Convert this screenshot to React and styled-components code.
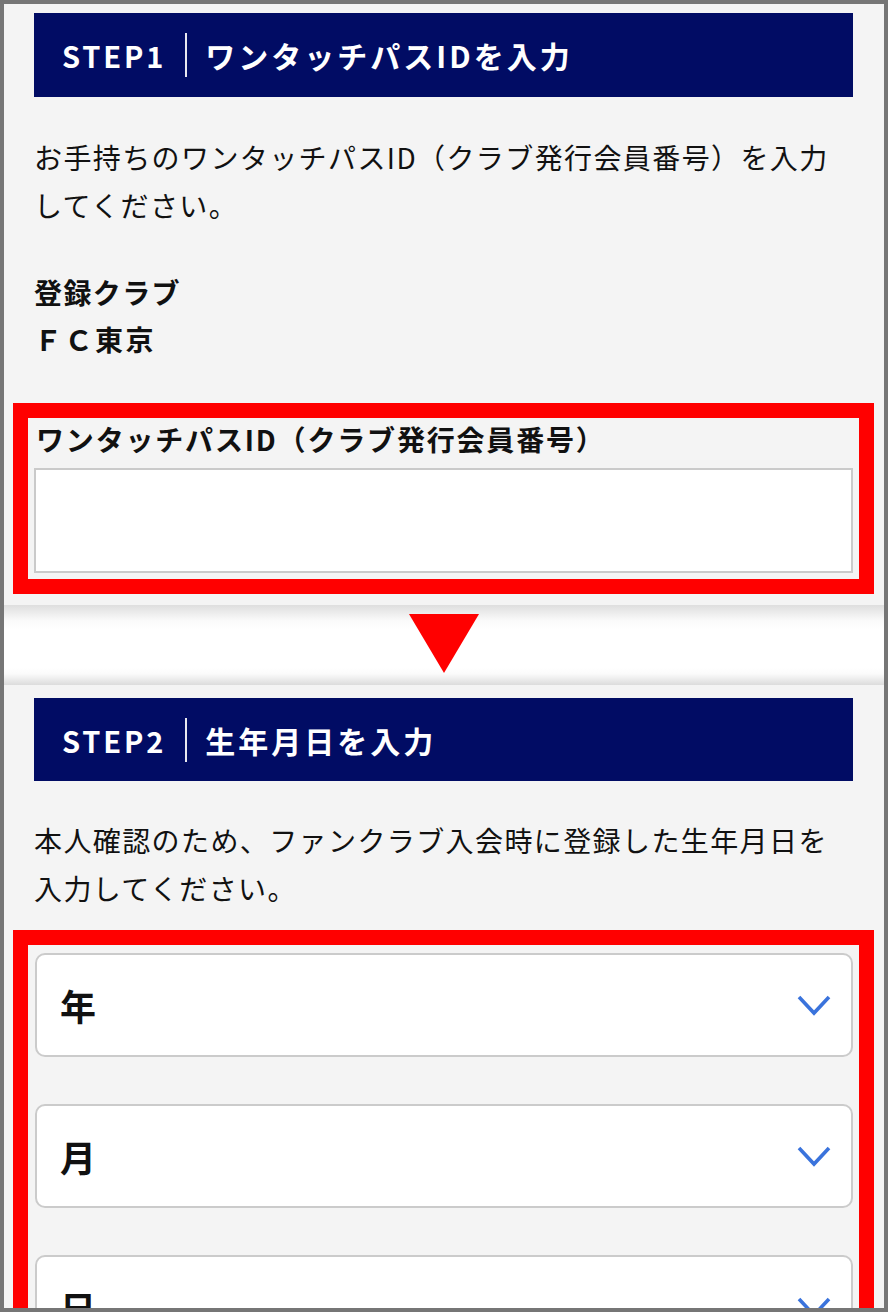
import React from 'react'
import styled, { createGlobalStyle } from 'styled-components'

const GlobalStyle = createGlobalStyle`
  body {
    margin: 0;
    font-family: "Noto Sans CJK JP", "Noto Sans", sans-serif;
    color: #111;
  }
`

const Frame = styled.div`
  width: 888px;
  height: 1312px;
  box-sizing: border-box;
  border: 4px solid #767676;
  background: #f4f4f4;
  overflow: hidden;
`

const Section = styled.section`
  padding: ${(p) => p.$top}px 31px ${(p) => p.$bottom}px 30px;
`

const StepHeader = styled.h2`
  display: flex;
  align-items: center;
  height: ${(p) => p.$height}px;
  margin: 0;
  padding: 0 28px;
  background: #010c64;
  color: #fff;
  font-weight: 700;
`

const StepNo = styled.span`
  font-size: 29px;
  letter-spacing: 0.1em;
`

const StepTitle = styled.span`
  font-size: 30px;
  letter-spacing: 0.1em;
`

const Divider = styled.span`
  width: 2px;
  height: 44px;
  margin: 0 18px 0 19px;
  background: #e8e8f0;
`

const Lead = styled.p`
  margin: ${(p) => p.$top}px 0 0;
  font-size: 28px;
  line-height: 48px;
  letter-spacing: 0.05em;
`

const Term = styled.div`
  margin-top: 40px;
  font-size: 28px;
  line-height: 47px;
  font-weight: 700;
  letter-spacing: 0.05em;
`

const Desc = styled.div`
  font-size: 28px;
  line-height: 47px;
  font-weight: 700;
  letter-spacing: 0.09em;
`

const Highlight = styled.div`
  margin: ${(p) => p.$top}px -21px 0;
  border: 15px solid #ff0000;
  padding: ${(p) => p.$pad}px 6px 6px;
`

const FieldLabel = styled.label`
  display: block;
  font-size: 28px;
  line-height: 30px;
  font-weight: 700;
  letter-spacing: 0.065em;
  padding-left: 2px;
`

const TextInput = styled.input`
  display: block;
  width: 100%;
  height: 105px;
  margin-top: 14px;
  box-sizing: border-box;
  border: 2px solid #cacaca;
  background: #fff;
  outline: none;
`

const Separator = styled.div`
  display: flex;
  justify-content: center;
  height: 80px;
  padding-top: 9px;
  box-sizing: border-box;
  background: linear-gradient(#dedede 0%, #fbfbfb 20%, #fff 30%, #fff 78%, #fbfbfb 86%, #dcdcdc 100%);
`

const Arrow = styled.div`
  width: 0;
  height: 0;
  border-left: 35px solid transparent;
  border-right: 35px solid transparent;
  border-top: 59px solid #ff0000;
`

const SelectList = styled.div`
  display: flex;
  flex-direction: column;
  gap: 47px;
`

const SelectBox = styled.div`
  display: flex;
  align-items: center;
  justify-content: space-between;
  height: 104px;
  box-sizing: border-box;
  margin-left: 1px;
  padding: 0 20px 0 23px;
  border: 2px solid #cbcbcb;
  border-radius: 10px;
  background: #fff;
  font-size: 36px;
  font-weight: 700;
`

const Chevron = () => (
  <svg width="34" height="21" viewBox="0 0 34 21">
    <polyline points="2,2 17,18 32,2" fill="none" stroke="#3a73dc" strokeWidth="3.6" />
  </svg>
)

const App = () => {
  return (
    <Frame>
      <GlobalStyle />
      <Section $top={9} $bottom={11}>
        <StepHeader $height={84}>
          <StepNo>STEP1</StepNo>
          <Divider />
          <StepTitle>ワンタッチパスIDを入力</StepTitle>
        </StepHeader>
        <Lead $top={36}>お手持ちのワンタッチパスID（クラブ発行会員番号）を入力してください。</Lead>
        <Term>登録クラブ</Term>
        <Desc>ＦＣ東京</Desc>
        <Highlight $top={40} $pad={6}>
          <FieldLabel>ワンタッチパスID（クラブ発行会員番号）</FieldLabel>
          <TextInput type="text" />
        </Highlight>
      </Section>

      <Separator>
        <Arrow />
      </Separator>

      <Section $top={13} $bottom={0}>
        <StepHeader $height={83}>
          <StepNo>STEP2</StepNo>
          <Divider />
          <StepTitle>生年月日を入力</StepTitle>
        </StepHeader>
        <Lead $top={35}>本人確認のため、ファンクラブ入会時に登録した生年月日を入力してください。</Lead>
        <Highlight $top={18} $pad={8}>
          <SelectList>
            {['年', '月', '日'].map((label) => (
              <SelectBox key={label}>
                {label}
                <Chevron />
              </SelectBox>
            ))}
          </SelectList>
        </Highlight>
      </Section>
    </Frame>
  )
}

export default App
